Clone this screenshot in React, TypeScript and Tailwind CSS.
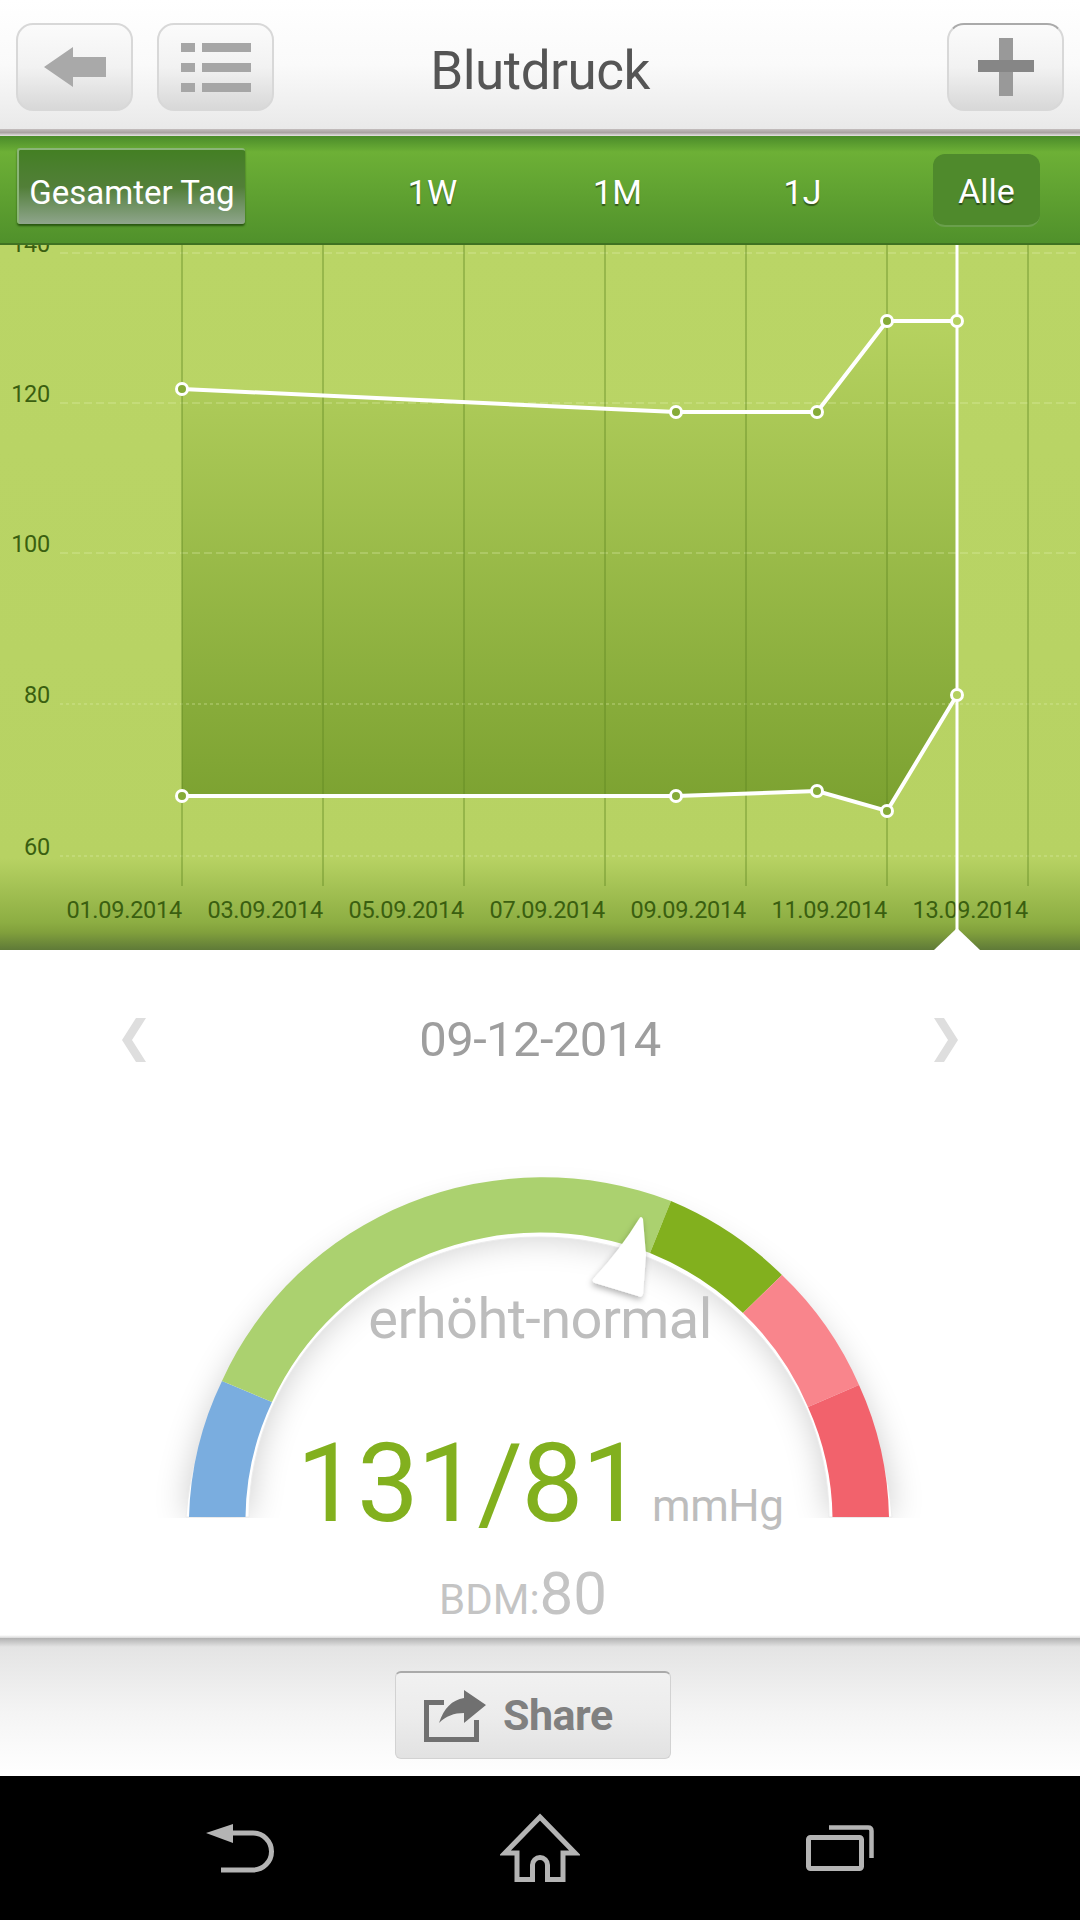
const UPPER = [[182, 389], [676, 412], [817, 412], [887, 321], [957, 321]]
const LOWER = [[182, 796], [676, 796], [817, 791], [887, 811], [957, 695]]
const V_LINES = [182, 323, 464, 605, 746, 887, 1028]
const Y_TICKS = [
  { label: '140', y: 253 },
  { label: '120', y: 403 },
  { label: '100', y: 553 },
  { label: '80', y: 704 },
  { label: '60', y: 856 },
]
const DATES = ['01.09.2014', '03.09.2014', '05.09.2014', '07.09.2014', '09.09.2014', '11.09.2014', '13.09.2014']

function pts(list: number[][]) {
  return list.map((p) => p.join(',')).join(' ')
}

function Chart() {
  const area = pts([...UPPER, ...[...LOWER].reverse()])
  return (
    <svg viewBox="0 245 1080 705" className="block w-[1080px] h-[705px] shrink-0">
      <defs>
        <linearGradient id="chartBg" x1="0" y1="245" x2="0" y2="950" gradientUnits="userSpaceOnUse">
          <stop offset="0" stopColor="#bad566" />
          <stop offset="0.87" stopColor="#b7d263" />
          <stop offset="0.96" stopColor="#8dae43" />
          <stop offset="0.975" stopColor="#81a03c" />
          <stop offset="1" stopColor="#5f7a38" />
        </linearGradient>
        <linearGradient id="chartArea" x1="0" y1="321" x2="0" y2="811" gradientUnits="userSpaceOnUse">
          <stop offset="0" stopColor="#b6d260" />
          <stop offset="1" stopColor="#7ba130" />
        </linearGradient>
        <clipPath id="chartClip">
          <rect x="0" y="245" width="1080" height="705" />
        </clipPath>
      </defs>
      <rect x="0" y="245" width="1080" height="705" fill="url(#chartBg)" />
      <polygon points={area} fill="url(#chartArea)" />
      {Y_TICKS.map((t, i) => (
        <line
          key={t.label}
          x1="60"
          x2="1080"
          y1={t.y}
          y2={t.y}
          stroke="#e4eeb0"
          strokeOpacity="0.55"
          strokeWidth="1.2"
          strokeDasharray={i < 3 ? '8 4' : '3 3'}
        />
      ))}
      {V_LINES.map((x) => (
        <line key={x} x1={x} x2={x} y1="245" y2="886" stroke="#5f8622" strokeOpacity="0.75" strokeWidth="1" />
      ))}
      <g clipPath="url(#chartClip)" fontFamily="Roboto, sans-serif" fontSize="23.5" fontWeight="400" fill="#3a5f10" letterSpacing="-0.25">
        {Y_TICKS.map((t) => (
          <text key={t.label} x="50" y={t.y - 1} textAnchor="end">{t.label}</text>
        ))}
        {DATES.map((d, i) => (
          <text key={d} x={V_LINES[i]} y="918" textAnchor="end">{d}</text>
        ))}
      </g>
      <polyline points={pts(UPPER)} fill="none" stroke="#fff" strokeWidth="4" />
      <polyline points={pts(LOWER)} fill="none" stroke="#fff" strokeWidth="4" />
      <line x1="957" x2="957" y1="245" y2="950" stroke="#fff" strokeWidth="3" />
      <polygon points="957,928 934,950 980,950" fill="#fff" />
      {[...UPPER, ...LOWER].map(([x, y]) => (
        <circle key={`${x}-${y}`} cx={x} cy={y} r="5.5" fill={x === 957 ? '#b4d05e' : '#86ab38'} stroke="#fff" strokeWidth="3" />
      ))}
    </svg>
  )
}

function segment(o1: number[], o2: number[], i2: number[], i1: number[]) {
  return `M${o1[0]} ${o1[1]} A350 340 0 0 1 ${o2[0]} ${o2[1]} L${i2[0]} ${i2[1]} A293.5 284 0 0 0 ${i1[0]} ${i1[1]} Z`
}

function Gauge() {
  return (
    <svg viewBox="0 1130 1080 505" className="block w-[1080px] h-[505px]">
      <defs>
        <filter id="gaugeBlur" x="-20%" y="-20%" width="140%" height="140%">
          <feGaussianBlur stdDeviation="17" />
        </filter>
        <filter id="needleShadow" x="-40%" y="-40%" width="180%" height="180%">
          <feDropShadow dx="-1" dy="3" stdDeviation="3" floodColor="#000" floodOpacity="0.3" />
        </filter>
        <clipPath id="gaugeClip">
          <rect x="156" y="1130" width="768" height="388" />
        </clipPath>
      </defs>
      <g clipPath="url(#gaugeClip)">
        <path
          d="M186 1517 A354 344 0 0 1 892 1517 L829 1517 A290 280 0 0 0 249 1517 Z"
          fill="#000"
          opacity="0.2"
          filter="url(#gaugeBlur)"
        />
      </g>
      <path d="M186 1517 A354 344 0 0 1 892 1517 L829 1517 A290 280 0 0 0 249 1517 Z" fill="#fff" stroke="#ececec" strokeWidth="1" />
      <path d={segment([189, 1517], [222, 1381], [272, 1402], [245.5, 1517])} fill="#7aaddf" />
      <path d={segment([222, 1381], [671, 1201], [650, 1253], [272, 1402])} fill="#abd16f" />
      <path d={segment([671, 1201], [782, 1275], [743, 1313], [650, 1253])} fill="#82b01e" />
      <path d={segment([782, 1275], [859, 1385], [808, 1407], [743, 1313])} fill="#f9858c" />
      <path d={segment([859, 1385], [889, 1517], [832.5, 1517], [808, 1407])} fill="#f2626c" />
      <path
        d="M639 1219 Q641 1215 643 1219 L646 1255 L643 1294 Q642 1298 638 1296 L595 1283 Q591 1281 594 1278 Q620 1250 639 1219 Z"
        fill="#fff"
        filter="url(#needleShadow)"
      />
    </svg>
  )
}

function HeaderButton({ children, topEdge }: { children: React.ReactNode; topEdge?: boolean }) {
  return (
    <button
      className={
        topEdge
          ? 'w-[117px] h-[88px] rounded-[17px] border-2 border-[#d8d8d8] border-t-[#aaaaaa] bg-gradient-to-b from-[#fbfbfb] via-[#f2f2f2] to-[#d8d8d8] flex items-center justify-center'
          : 'w-[117px] h-[88px] rounded-[17px] border-2 border-[#d8d8d8] bg-gradient-to-b from-[#fbfbfb] via-[#f2f2f2] to-[#d8d8d8] flex items-center justify-center'
      }
    >
      {children}
    </button>
  )
}

export default function App() {
  return (
    <div className="w-[1080px] h-[1920px] flex flex-col bg-white overflow-hidden font-[Roboto,sans-serif]">
      {/* Top bar */}
      <header className="h-[129px] shrink-0 flex items-start pt-[23px] px-[16px] bg-gradient-to-b from-white via-[#fafafa] to-[#e9e9e9]">
        <div className="flex-1 flex gap-[24px]">
          <HeaderButton>
            <svg width="62" height="40" viewBox="0 0 62 40">
              <polygon points="0,20 29,0 29,10 62,10 62,30 29,30 29,40" fill="#a9a9a9" />
            </svg>
          </HeaderButton>
          <HeaderButton>
            <svg width="70" height="49" viewBox="0 0 70 49">
              <g fill="#a6a6a6">
                <rect x="0" y="0" width="14" height="9" />
                <rect x="21" y="0" width="49" height="9" />
                <rect x="0" y="20" width="14" height="9" />
                <rect x="21" y="20" width="49" height="9" />
                <rect x="0" y="40" width="14" height="9" />
                <rect x="21" y="40" width="49" height="9" />
              </g>
            </svg>
          </HeaderButton>
        </div>
        <h1 className="mt-[16px] text-[53px] leading-[64px] tracking-[-0.5px] text-[#555555]">Blutdruck</h1>
        <div className="flex-1 flex justify-end">
          <HeaderButton topEdge>
            <svg width="56" height="58" viewBox="0 0 56 58">
              <rect x="21" y="0" width="14" height="58" fill="#999999" />
              <rect x="0" y="22" width="56" height="12" fill="#868686" />
            </svg>
          </HeaderButton>
        </div>
      </header>
      <div className="h-[7px] shrink-0 bg-gradient-to-b from-[#c4bebe] via-[#a9a3a3] to-[#e7e5e5]" />

      {/* Range tabs */}
      <nav className="h-[109px] shrink-0 flex items-start pl-[17px] bg-gradient-to-b from-[#4a8b2a] via-[#6db036] via-[15%] to-[#50912b] border-b-2 border-[#3f7222] text-white text-[34px] [text-shadow:0_2px_1px_rgba(0,0,0,0.45)]">
        <button className="mt-[12px] w-[228px] h-[76px] pt-[11px] rounded-[3px] border-t-2 border-l-2 border-[#8bb578] bg-gradient-to-b from-[#437f23] via-[#527f38] to-[#8fa58c] shadow-[0_2px_2px_rgba(30,70,10,0.8)] text-[33px]">
          Gesamter Tag
        </button>
        <div className="ml-[95px] w-[185px] h-[109px] flex items-center justify-center pt-[3px]">1W</div>
        <div className="w-[185px] h-[109px] flex items-center justify-center pt-[3px]">1M</div>
        <div className="w-[185px] h-[109px] flex items-center justify-center pt-[3px]">1J</div>
        <div className="ml-[38px] mt-[18px] w-[107px] h-[73px] pt-[4px] rounded-[12px] bg-[#4f8a2c] border-b-2 border-[#6a9f4c] flex items-center justify-center">Alle</div>
      </nav>

      <Chart />

      {/* Date picker */}
      <div className="h-[180px] shrink-0 flex items-center justify-between px-[122px]">
        <svg width="24" height="44" viewBox="0 0 24 44">
          <polygon points="14,0 24,0 10,22 24,44 14,44 0,22" fill="#dedede" />
        </svg>
        <span className="text-[49px] tracking-[-0.6px] text-[#9e9e9e]">09-12-2014</span>
        <svg width="24" height="44" viewBox="0 0 24 44">
          <polygon points="10,0 0,0 14,22 0,44 10,44 24,22" fill="#dedede" />
        </svg>
      </div>

      {/* Gauge and reading */}
      <section className="relative h-[505px] shrink-0">
        <Gauge />
        <div className="absolute inset-0 flex flex-col items-center pt-[161px]">
          <div className="text-[56px] leading-none tracking-[-0.6px] text-[#bdbdbd]">erhöht-normal</div>
          <div className="mt-[82px] flex items-baseline gap-[10px] text-[#82b01e]">
            <span className="text-[110px] leading-none tracking-[-1.5px]">131/81</span>
            <span className="text-[44px] leading-none tracking-[-0.5px] text-[#bdbdbd]">mmHg</span>
          </div>
          <div className="mt-[25px] flex items-baseline text-[#c4c4c4] -translate-x-[17px]">
            <span className="text-[42px] leading-none">BDM:</span>
            <span className="text-[60px] leading-none">80</span>
          </div>
        </div>
      </section>

      {/* Share bar */}
      <div className="h-[3px] shrink-0 bg-gradient-to-b from-white to-[#d8d8d8]" />
      <div className="h-[9px] shrink-0 bg-gradient-to-b from-[#b2b2b2] to-[#e4e4e4]" />
      <footer className="h-[129px] shrink-0 flex justify-center pt-[24px] pr-[14px] bg-gradient-to-b from-[#e4e4e4] via-[#f4f4f4] to-white">
        <button className="w-[276px] h-[88px] rounded-[6px] border border-[#d2d2d2] border-t-2 border-t-[#aaaaaa] bg-gradient-to-b from-[#f1f1f1] via-[#ececec] to-[#e2e2e2] flex items-center gap-[17px] pl-[28px]">
          <svg width="62" height="52" viewBox="0 0 62 52">
            <path d="M20 12.5 H2.5 V49.5 H52.5 V30" fill="none" stroke="#707070" strokeWidth="5" />
            <path d="M15 33 C20 18 28 10 40 8 V0 L62 15 L40 33 V23 C30 23 22 26 15 33 Z" fill="#707070" />
          </svg>
          <span className="text-[43px] font-bold tracking-[-0.5px] text-[#808080]">Share</span>
        </button>
      </footer>

      {/* Android nav */}
      <div className="flex-1 bg-black flex items-center pl-[90px]">
        <div className="w-[300px] flex justify-center">
          <svg width="68" height="49" viewBox="0 0 68 49">
            <polygon points="0,9 27,0 27,19" fill="#b4b4b4" />
            <path d="M27 9 H47 A18.5 18.5 0 0 1 47 46 H15" fill="none" stroke="#b4b4b4" strokeWidth="5" />
          </svg>
        </div>
        <div className="w-[300px] flex justify-center">
          <svg width="80" height="70" viewBox="0 0 80 70">
            <path d="M40 4 L75 40 H63 V66.5 H47.5 V52 A7.5 7.5 0 0 0 32.5 52 V66.5 H17 V40 H5 Z" fill="none" stroke="#b4b4b4" strokeWidth="5" />
          </svg>
        </div>
        <div className="w-[300px] flex justify-center">
          <svg width="68" height="46" viewBox="0 0 68 46">
            <rect x="2.5" y="12.5" width="53" height="31" rx="2" fill="none" stroke="#b4b4b4" strokeWidth="5" />
            <path d="M23 2.5 H62 Q65.5 2.5 65.5 6 V33" fill="none" stroke="#b4b4b4" strokeWidth="4.5" />
          </svg>
        </div>
      </div>
    </div>
  )
}
